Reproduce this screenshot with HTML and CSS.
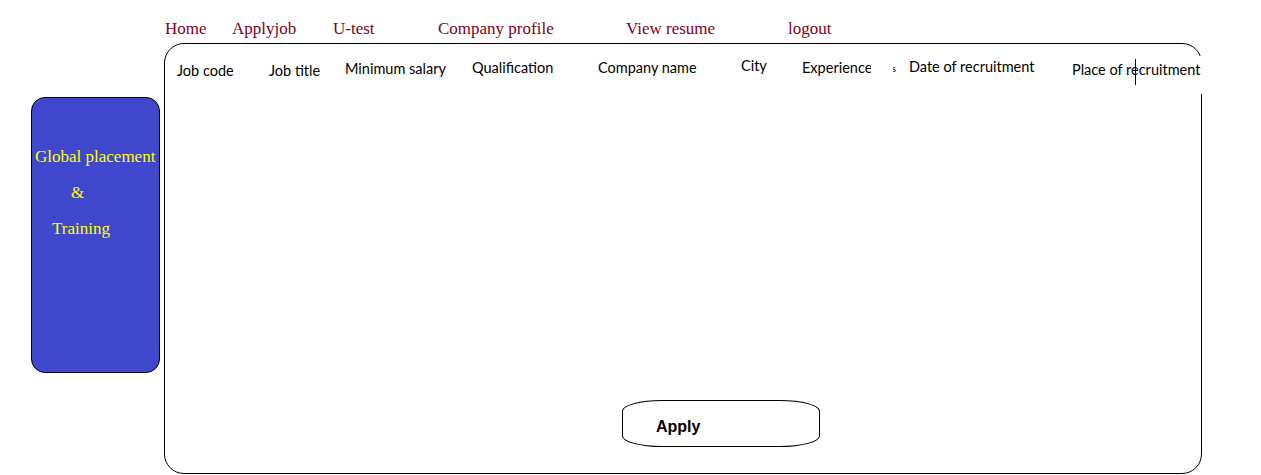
FILE: index.html
```html
<!DOCTYPE html>
<html>
<head>
<meta charset="utf-8">
<title>Apply job</title>
<link rel="stylesheet" href="styles.css">
</head>
<body>
<nav class="nav">
  <a class="nav-item w-home">Home</a>
  <a class="nav-item w-apply">Applyjob</a>
  <a class="nav-item w-utest">U-test</a>
  <a class="nav-item w-company">Company profile</a>
  <a class="nav-item w-resume">View resume</a>
  <a class="nav-item">logout</a>
</nav>
<div class="layout">
  <aside class="brand">
    <p class="brand-line l1">Global placement</p>
    <p class="brand-line l2">&amp;</p>
    <p class="brand-line l3">Training</p>
  </aside>
  <main class="panel">
    <div class="head-row">
      <div class="cell c-code">Job code</div>
      <div class="cell c-title">Job title</div>
      <div class="cell c-salary">Minimum salary</div>
      <div class="cell c-qual">Qualification</div>
      <div class="cell c-comp">Company name</div>
      <div class="cell c-city">City</div>
      <div class="cell c-exp">Experience</div>
      <div class="cell c-dot">s</div>
      <div class="cell c-date">Date of recruitment</div>
      <div class="cell c-place">Place of recruitment</div>
    </div>
    <button class="apply">Apply</button>
  </main>
</div>
</body>
</html>
```
FILE: styles.css
```css
html, body { margin: 0; padding: 0; background: #fff; }
body { width: 1261px; height: 475px; overflow: hidden; }

.nav {
  display: flex;
  padding-left: 165px;
  height: 43px;
  align-items: flex-start;
  padding-top: 19px;
  box-sizing: border-box;
  font-family: "Liberation Serif", serif;
  font-size: 17px;
  color: #800020;
}
.nav-item { display: block; line-height: 20px; }
.w-home { width: 67px; }
.w-apply { width: 101px; }
.w-utest { width: 105px; }
.w-company { width: 188px; }
.w-resume { width: 162px; }

.layout { display: flex; align-items: flex-start; }

.brand {
  margin-left: 31px;
  margin-top: 54px;
  width: 127px;
  background: #3f48cc;
  border: 1px solid #000;
  border-radius: 14px;
  font-family: "Liberation Serif", serif;
  font-size: 17px;
  color: #ffff00;
  padding-top: 49px;
  box-sizing: content-box;
  height: 225px;
}
.brand-line { margin: 0; line-height: 20px; white-space: nowrap; }
.l1 { padding-left: 3px; }
.l2 { padding-left: 39px; margin-top: 16px; }
.l3 { padding-left: 20px; margin-top: 16px; }

.panel {
  margin-left: 4px;
  width: 1036px;
  height: 429px;
  border: 1px solid #000;
  border-radius: 20px;
  display: flex;
  flex-direction: column;
  align-items: flex-start;
}

.head-row {
  display: flex;
  align-items: flex-start;
  padding-left: 12px;
  margin-top: 12px;
  height: 38px;
  font-family: Lato, "Liberation Sans", sans-serif;
  font-size: 14.5px;
  color: #000;
}
.cell { white-space: nowrap; overflow: hidden; line-height: 18px; }
.c-code { width: 92px; padding-top: 6px; }
.c-title { width: 76px; padding-top: 6px; }
.c-salary { width: 127px; padding-top: 4px; }
.c-qual { width: 126px; padding-top: 3px; }
.c-comp { width: 143px; padding-top: 3px; }
.c-city { width: 61px; padding-top: 1px; }
.c-exp { width: 69px; padding-top: 3px; margin-right: 22px; }
.c-dot { width: 3px; padding-top: 3px; margin-right: 13px; font-size: 10px; direction: rtl; }
.c-date { width: 163px; padding-top: 2px; }
.c-place {
  width: 131px;
  padding-top: 5px;
  height: 33px;
  background: #fff;
  position: relative;
}
.c-place::after {
  content: "";
  position: absolute;
  left: 63px;
  top: 3px;
  width: 1px;
  height: 26px;
  background: #000;
}

.apply {
  margin-top: auto;
  margin-left: 457px;
  margin-bottom: 26px;
  width: 198px;
  height: 47px;
  background: #fff;
  border: 1px solid #000;
  border-radius: 40px / 11px;
  font-family: "Liberation Sans", sans-serif;
  font-weight: bold;
  font-size: 16px;
  text-align: left;
  padding: 7px 0 0 33px;
  color: #000;
}
```
